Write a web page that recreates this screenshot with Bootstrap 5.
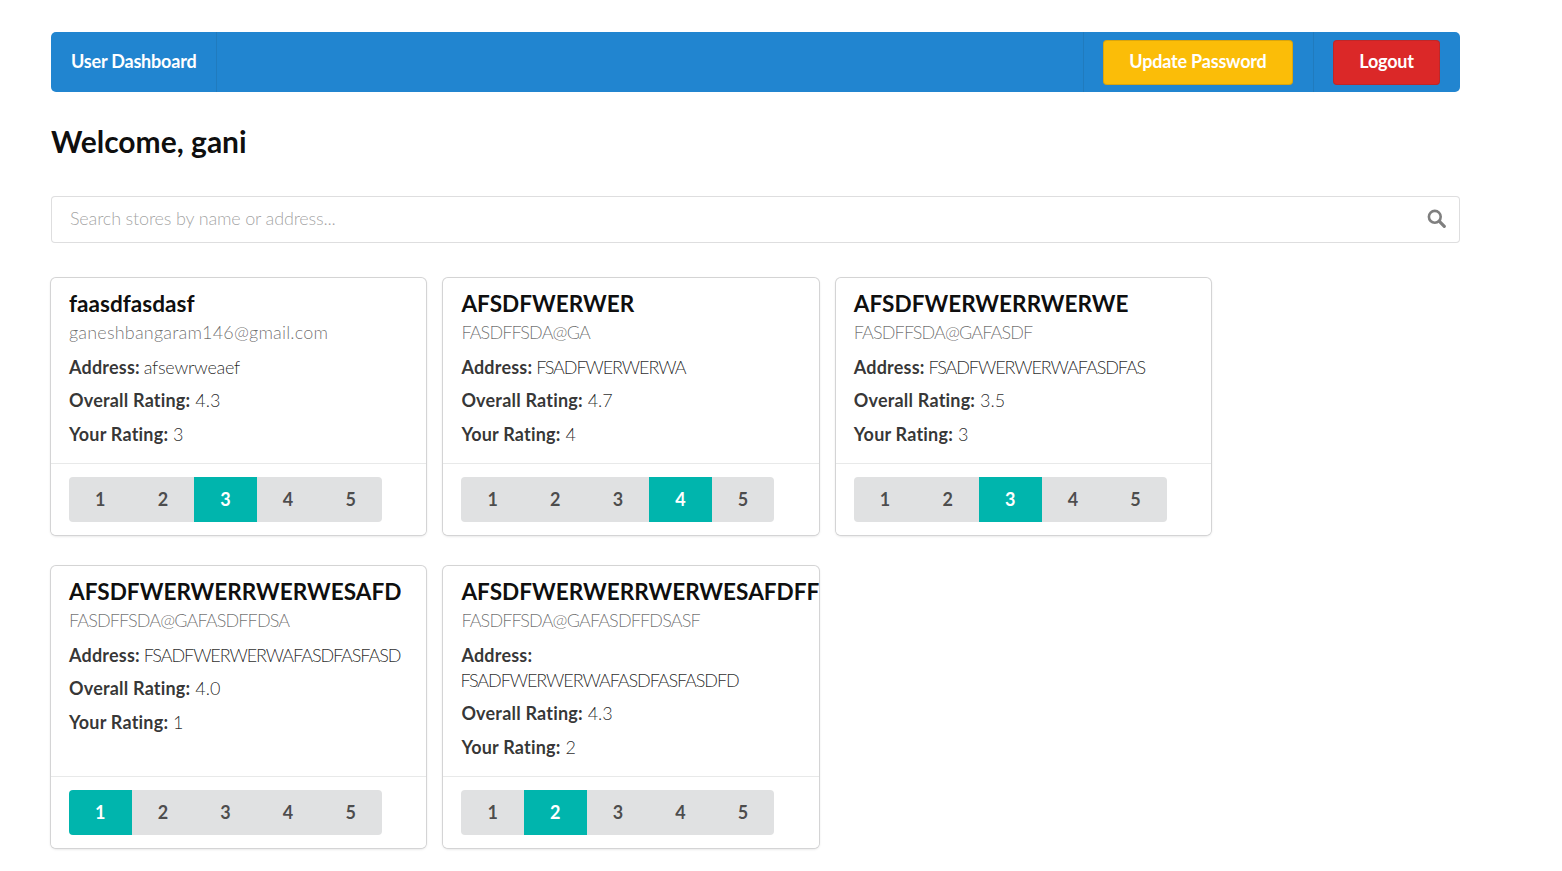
<!DOCTYPE html>
<html lang="en">
<head>
  <meta charset="UTF-8">
  <title>User Dashboard</title>
  <link href="https://cdn.jsdelivr.net/npm/bootstrap@5.3.3/dist/css/bootstrap.min.css" rel="stylesheet">
  <style>
    body {
      font-family: Lato, "Liberation Sans", sans-serif;
      font-size: 18px;
      line-height: 25.2px;
      color: rgba(0,0,0,.87);
      background: #fff;
      font-kerning: normal;
      text-rendering: optimizeLegibility;
    }
    .page-wrap {
      width: 1409px;
      margin-left: 51px;
      padding: 32px 0 20px;
    }
    .top-menu {
      height: 60px;
      padding: 0;
      background: #2185d0;
      border-radius: 5px;
    }
    .menu-item {
      height: 60px;
      display: flex;
      align-items: center;
      color: #fff;
      font-weight: 700;
      letter-spacing: -.2px;
    }
    .menu-brand {
      width: 166px;
      padding-left: 20px;
      padding-bottom: 1px;
      border-right: 1px solid rgba(34,36,38,.1);
    }
    .menu-update {
      width: 230px;
      padding-left: 19px;
      border-left: 1px solid rgba(34,36,38,.1);
    }
    .menu-logout {
      width: 147px;
      padding-left: 19px;
      border-left: 1px solid rgba(34,36,38,.1);
    }
    .menu-btn {
      height: 45px;
      padding: 0 0 2px;
      border: 0;
      border-radius: 4px;
      color: #fff;
      font-size: 18px;
      font-weight: 700;
      letter-spacing: -.2px;
      box-shadow: inset 0 0 0 1px rgba(34,36,38,.15);
    }
    .btn-update { width: 190px; background: #fbbd08; }
    .btn-logout { width: 107px; background: #db2828; }
    .welcome {
      margin: 32px 0 38px;
      font-size: 30px;
      line-height: 34px;
      font-weight: 700;
      color: rgba(0,0,0,.95);
    }
    .search-box { height: 47px; }
    .search-box input {
      height: 47px;
      padding: 0 50px 4px 18px;
      font-size: 18px;
      border: 1px solid rgba(34,36,38,.15);
      border-radius: 4px;
      box-shadow: none;
    }
    .search-box input::placeholder {
      color: rgba(150,150,150,.87);
      font-weight: 300;
      letter-spacing: -.17px;
    }
    .search-glyph {
      position: absolute;
      top: 13px;
      right: 14px;
      width: 19px;
      height: 19px;
    }
    .store-grid {
      display: grid;
      grid-template-columns: repeat(3, 375.4px);
      column-gap: 17px;
      row-gap: 31px;
      margin-top: 35px;
    }
    .store-card {
      border: 0;
      border-radius: 5px;
      box-shadow: 0 1px 3px 0 #d4d4d5, 0 0 0 1px #d4d4d5;
    }
    .store-body { padding: 11px 18px 7.6px; }
    .store-title {
      margin: 0 0 -1px;
      font-size: 22.6px;
      line-height: 30px;
      font-weight: 700;
      color: rgba(0,0,0,.95);
      white-space: nowrap;
    }
    .store-meta {
      margin-bottom: 8.6px;
      line-height: 28px;
      color: rgba(0,0,0,.58);
      font-weight: 300;
    }
    .store-line {
      margin-bottom: 8.4px;
      color: rgba(0,0,0,.85);
      font-weight: 300;
    }
    .store-line strong {
      color: rgba(0,0,0,.8);
      font-weight: 700;
      letter-spacing: .2px;
    }
    /* light uppercase runs wider here than in the picture */
    .meta-caps { letter-spacing: -.86px; }
    .meta-lower { letter-spacing: .18px; }
    .line-caps { letter-spacing: -1.08px; margin-left: -1px; }
    .line-lower { letter-spacing: -.27px; margin-left: -1px; }
    .store-foot {
      padding: 13px 18px 13px;
      background: #fff;
      border-top: 1px solid rgba(34,36,38,.1);
    }
    .rate-group { width: 313px; }
    .rate-btn {
      height: 45px;
      padding: 0;
      border: 0;
      background: #e0e1e2;
      color: rgba(0,0,0,.68);
      font-size: 18px;
      font-weight: 700;
      border-radius: 4px;
    }
    .btn-group.rate-group > .rate-btn + .rate-btn { margin-left: 0; }
    .rate-btn.is-picked { background: #00b5ad; color: #fff; }
  </style>
</head>
<body>

  <div class="page-wrap">
    <nav class="navbar top-menu">
      <div class="menu-item menu-brand">User Dashboard</div>
      <div class="d-flex ms-auto">
        <div class="menu-item menu-update"><button type="button" class="btn menu-btn btn-update">Update Password</button></div>
        <div class="menu-item menu-logout"><button type="button" class="btn menu-btn btn-logout">Logout</button></div>
      </div>
    </nav>

    <h2 class="welcome">Welcome, gani</h2>

    <div class="search-box position-relative">
      <input type="text" class="form-control" placeholder="Search stores by name or address...">
      <svg class="search-glyph" viewBox="0 0 19 19" fill="none" stroke="#7f7f7f">
        <circle cx="7.8" cy="7.8" r="5.9" stroke-width="2.6"/>
        <path d="M12.4 12.4 17.3 17.3" stroke-width="3.2" stroke-linecap="round"/>
      </svg>
    </div>

    <div class="store-grid">
      <div class="card store-card">
        <div class="card-body store-body">
          <h5 class="store-title">faasdfasdasf</h5>
          <div class="store-meta meta-lower">ganeshbangaram146@gmail.com</div>
          <p class="store-line"><strong>Address:</strong> <span class="line-lower">afsewrweaef</span></p>
          <p class="store-line"><strong>Overall Rating:</strong> 4.3</p>
          <p class="store-line"><strong>Your Rating:</strong> 3</p>
        </div>
        <div class="card-footer store-foot">
          <div class="btn-group rate-group">
            <button type="button" class="btn rate-btn">1</button>
            <button type="button" class="btn rate-btn">2</button>
            <button type="button" class="btn rate-btn is-picked">3</button>
            <button type="button" class="btn rate-btn">4</button>
            <button type="button" class="btn rate-btn">5</button>
          </div>
        </div>
      </div>

      <div class="card store-card">
        <div class="card-body store-body">
          <h5 class="store-title">AFSDFWERWER</h5>
          <div class="store-meta meta-caps">FASDFFSDA@GA</div>
          <p class="store-line"><strong>Address:</strong> <span class="line-caps">FSADFWERWERWA</span></p>
          <p class="store-line"><strong>Overall Rating:</strong> 4.7</p>
          <p class="store-line"><strong>Your Rating:</strong> 4</p>
        </div>
        <div class="card-footer store-foot">
          <div class="btn-group rate-group">
            <button type="button" class="btn rate-btn">1</button>
            <button type="button" class="btn rate-btn">2</button>
            <button type="button" class="btn rate-btn">3</button>
            <button type="button" class="btn rate-btn is-picked">4</button>
            <button type="button" class="btn rate-btn">5</button>
          </div>
        </div>
      </div>

      <div class="card store-card">
        <div class="card-body store-body">
          <h5 class="store-title">AFSDFWERWERRWERWE</h5>
          <div class="store-meta meta-caps">FASDFFSDA@GAFASDF</div>
          <p class="store-line"><strong>Address:</strong> <span class="line-caps">FSADFWERWERWAFASDFAS</span></p>
          <p class="store-line"><strong>Overall Rating:</strong> 3.5</p>
          <p class="store-line"><strong>Your Rating:</strong> 3</p>
        </div>
        <div class="card-footer store-foot">
          <div class="btn-group rate-group">
            <button type="button" class="btn rate-btn">1</button>
            <button type="button" class="btn rate-btn">2</button>
            <button type="button" class="btn rate-btn is-picked">3</button>
            <button type="button" class="btn rate-btn">4</button>
            <button type="button" class="btn rate-btn">5</button>
          </div>
        </div>
      </div>

      <div class="card store-card">
        <div class="card-body store-body">
          <h5 class="store-title">AFSDFWERWERRWERWESAFD</h5>
          <div class="store-meta meta-caps">FASDFFSDA@GAFASDFFDSA</div>
          <p class="store-line"><strong>Address:</strong> <span class="line-caps">FSADFWERWERWAFASDFASFASD</span></p>
          <p class="store-line"><strong>Overall Rating:</strong> 4.0</p>
          <p class="store-line"><strong>Your Rating:</strong> 1</p>
        </div>
        <div class="card-footer store-foot">
          <div class="btn-group rate-group">
            <button type="button" class="btn rate-btn is-picked">1</button>
            <button type="button" class="btn rate-btn">2</button>
            <button type="button" class="btn rate-btn">3</button>
            <button type="button" class="btn rate-btn">4</button>
            <button type="button" class="btn rate-btn">5</button>
          </div>
        </div>
      </div>

      <div class="card store-card">
        <div class="card-body store-body">
          <h5 class="store-title">AFSDFWERWERRWERWESAFDFF</h5>
          <div class="store-meta meta-caps">FASDFFSDA@GAFASDFFDSASF</div>
          <p class="store-line"><strong>Address:</strong> <span class="line-caps">FSADFWERWERWAFASDFASFASDFD</span></p>
          <p class="store-line"><strong>Overall Rating:</strong> 4.3</p>
          <p class="store-line"><strong>Your Rating:</strong> 2</p>
        </div>
        <div class="card-footer store-foot">
          <div class="btn-group rate-group">
            <button type="button" class="btn rate-btn">1</button>
            <button type="button" class="btn rate-btn is-picked">2</button>
            <button type="button" class="btn rate-btn">3</button>
            <button type="button" class="btn rate-btn">4</button>
            <button type="button" class="btn rate-btn">5</button>
          </div>
        </div>
      </div>
    </div>
  </div>

  <script src="https://cdn.jsdelivr.net/npm/bootstrap@5.3.3/dist/js/bootstrap.bundle.min.js"></script>
</body>
</html>
